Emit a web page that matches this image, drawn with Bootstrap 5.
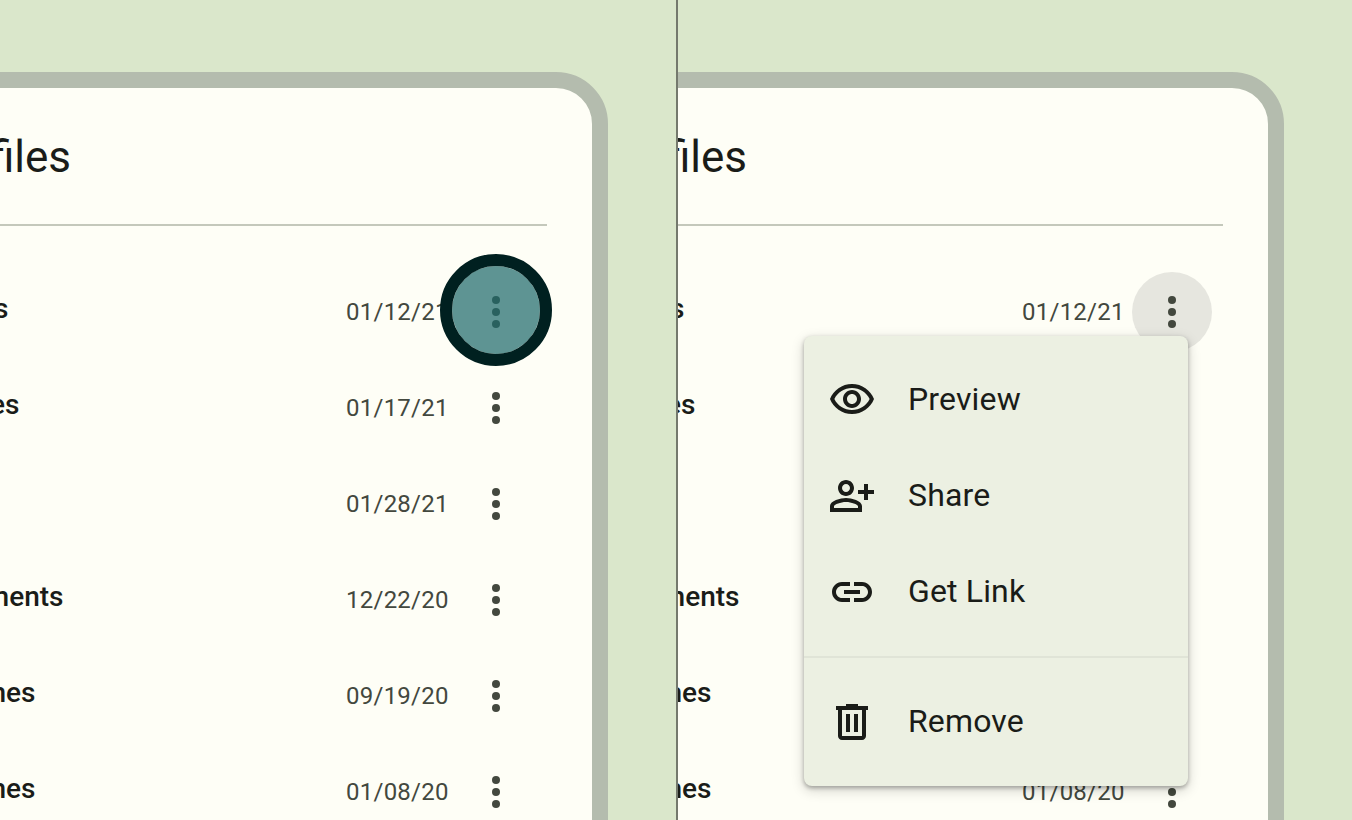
<!DOCTYPE html>
<html lang="en">
<head>
<meta charset="utf-8">
<meta name="viewport" content="width=device-width, initial-scale=1">
<title>Files</title>
<link href="https://cdn.jsdelivr.net/npm/bootstrap@5.3.0/dist/css/bootstrap.min.css" rel="stylesheet">
<style>
  body { font-family: Roboto, sans-serif; background: #dae7cb; color: #1a1c18; }
  .pane { height: 820px; padding-top: 72px; }
  .pane-next { border-left: 2px solid #74796d; }
  .pane-next .device { margin-left: -18px; }
  .device { width: 624px; height: 800px; margin-left: -16px; border: 16px solid #b4bcae; border-top-right-radius: 52px; background: #fefef6; }
  .files-title { height: 138px; width: 547px; padding-top: 37px; border-bottom: 2px solid #c4c8bb; }
  .files-title span { width: 71px; font-size: 44px; line-height: 64px; }
  .file-list { padding-top: 38px; }
  .file-row { height: 96px; }
  .file-name { font-size: 28px; font-weight: 500; line-height: 40px; margin-top: -6px; }
  .name-col { width: 346px; }
  .date-col { width: 110px; font-size: 24px; letter-spacing: .25px; color: #43483e; }
  .more { width: 80px; height: 80px; border: 0; padding: 0; background: transparent; color: #43483e; }
  .more.active { background: #e6e6df; }
  .tap { width: 112px; height: 112px; left: -16px; top: -18px; border: 12px solid #002020; background: rgba(32,107,108,.72) padding-box; }
  .file-menu { left: 128px; top: 72px; width: 384px; padding: 16px 0; background: #ecf0e2; border-radius: 8px; box-shadow: 0 2px 4px rgba(0,0,0,.3), 0 4px 12px 2px rgba(0,0,0,.13); }
  .file-menu .item { height: 96px; padding: 0 24px; gap: 32px; font-size: 32px; line-height: 48px; letter-spacing: .15px; color: #1a1c18; }
  .file-menu .item span { margin-top: -2px; }
  .file-menu .split { height: 2px; margin: 16px 0; background: #e0e4d7; }
  .menu-anchor { left: -456px; top: -8px; width: 512px; z-index: 5; }
</style>
</head>
<body class="overflow-hidden">
<svg class="d-none">
  <symbol id="dots" viewBox="0 0 48 48"><circle cx="24" cy="12" r="4"/><circle cx="24" cy="24" r="4"/><circle cx="24" cy="36" r="4"/></symbol>
</svg>
<div class="row g-0">
  <section class="col-6 pane overflow-hidden">
    <div class="device">
      <header class="files-title"><span class="d-flex justify-content-end">files</span></header>
      <div class="file-list"></div>
    </div>
  </section>
  <section class="col-6 pane pane-next overflow-hidden">
    <div class="device">
      <header class="files-title"><span class="d-flex justify-content-end">files</span></header>
      <div class="file-list" data-open></div>
    </div>
  </section>
</div>

<template id="menu">
  <div class="file-menu position-absolute">
    <div class="item d-flex align-items-center"><svg width="48" height="48" viewBox="0 0 24 24" fill="currentColor"><path d="M12 6c3.79 0 7.17 2.13 8.82 5.5C19.17 14.87 15.79 17 12 17s-7.17-2.13-8.82-5.5C4.83 8.13 8.21 6 12 6m0-2C7 4 2.73 7.11 1 11.5 2.73 15.89 7 19 12 19s9.27-3.11 11-7.5C21.27 7.11 17 4 12 4zm0 5c1.38 0 2.5 1.12 2.5 2.5S13.38 14 12 14s-2.5-1.12-2.5-2.5S10.62 9 12 9m0-2c-2.48 0-4.5 2.02-4.5 4.5S9.52 16 12 16s4.5-2.02 4.5-4.5S14.48 7 12 7z"/></svg><span>Preview</span></div>
    <div class="item d-flex align-items-center"><svg width="48" height="48" viewBox="0 0 24 24" fill="currentColor"><path d="M13 8c0-2.21-1.79-4-4-4S5 5.79 5 8s1.79 4 4 4 4-1.79 4-4zm-2 0c0 1.1-.9 2-2 2s-2-.9-2-2 .9-2 2-2 2 .9 2 2zM9 13c-2.67 0-8 1.34-8 4v3h16v-3c0-2.66-5.33-4-8-4zm6 5H3v-.99C3.2 16.29 6.3 15 9 15s5.8 1.29 6 2v1zM20 9V6h-2v3h-3v2h3v3h2v-3h3V9z"/></svg><span>Share</span></div>
    <div class="item d-flex align-items-center"><svg width="48" height="48" viewBox="0 0 24 24" fill="currentColor"><path d="M17 7h-4v2h4c1.65 0 3 1.35 3 3s-1.35 3-3 3h-4v2h4c2.76 0 5-2.24 5-5s-2.24-5-5-5zm-6 8H7c-1.65 0-3-1.35-3-3s1.35-3 3-3h4V7H7c-2.76 0-5 2.24-5 5s2.24 5 5 5h4v-2zm-3-4h8v2H8z"/></svg><span>Get Link</span></div>
    <div class="split"></div>
    <div class="item d-flex align-items-center"><svg width="48" height="48" viewBox="0 0 24 24" fill="currentColor"><path d="M15 4V3H9v1H4v2h1v13c0 1.1.9 2 2 2h10c1.1 0 2-.9 2-2V6h1V4h-5zm2 15H7V6h10v13zM9 8h2v9H9zm4 0h2v9h-2z"/></svg><span>Remove</span></div>
  </div>
</template>
<script>
  // name: the tail of the file name in view; end: where it stops within the column
  const files = [
    { name: 's', end: 8.5, date: '01/12/21' },
    { name: 'es', end: 19.5, date: '01/17/21' },
    { name: '', end: 0, date: '01/28/21' },
    { name: 'ments', end: 63.5, date: '12/22/20' },
    { name: 'mes', end: 35.5, date: '09/19/20' },
    { name: 'mes', end: 35.5, date: '01/08/20' }
  ];
  document.querySelectorAll('.file-list').forEach(list => {
    const open = 'open' in list.dataset;
    list.innerHTML = files.map((f, i) => `
      <div class="file-row d-flex align-items-center">
        <div class="name-col"><div class="file-name d-flex justify-content-end" style="width:${f.end}px">${f.name}</div></div>
        <div class="date-col text-nowrap">${f.date}</div>
        <div class="position-relative">
          <button class="more rounded-circle d-flex align-items-center justify-content-center ${open && i === 0 ? 'active' : ''}" aria-label="More">
            <svg width="48" height="48" fill="currentColor"><use href="#dots"/></svg>
          </button>
          ${i === 0 ? (open ? '<div class="menu-anchor position-absolute">' + document.getElementById('menu').innerHTML + '</div>' : '<div class="tap position-absolute rounded-circle"></div>') : ''}
        </div>
      </div>`).join('');
  });
</script>
<script src="https://cdn.jsdelivr.net/npm/bootstrap@5.3.0/dist/js/bootstrap.bundle.min.js"></script>
</body>
</html>
